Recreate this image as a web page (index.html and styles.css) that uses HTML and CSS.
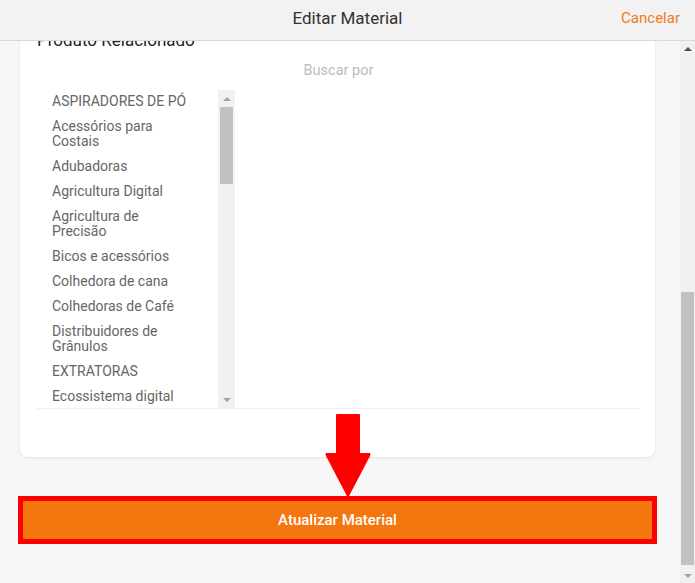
FILE: index.html
```html
<!DOCTYPE html>
<html lang="pt-BR">
<head>
    <meta charset="UTF-8">
    <meta name="viewport" content="width=device-width, initial-scale=1.0">
    <title>Editar Material</title>
    <link rel="stylesheet" href="styles.css">
</head>
<body>
    <div class="topbar">
        <span class="topbar-title">Editar Material</span>
        <a class="topbar-cancel" href="#">Cancelar</a>
    </div>

    <div class="page">
        <div class="page-content">
            <div class="card">
                <h2 class="card-title">Produto Relacionado</h2>
                <div class="search">Buscar por</div>

                <div class="picker">
                    <ul class="picker-list">
                        <li>ASPIRADORES DE PÓ</li>
                        <li>Acessórios para Costais</li>
                        <li>Adubadoras</li>
                        <li>Agricultura Digital</li>
                        <li>Agricultura de Precisão</li>
                        <li>Bicos e acessórios</li>
                        <li>Colhedora de cana</li>
                        <li>Colhedoras de Café</li>
                        <li>Distribuidores de Grânulos</li>
                        <li>EXTRATORAS</li>
                        <li>Ecossistema digital</li>
                    </ul>
                    <div class="mini-scroll">
                        <div class="mini-btn"><span class="tri tri-up"></span></div>
                        <div class="mini-thumb"></div>
                        <div class="mini-fill"></div>
                        <div class="mini-btn"><span class="tri tri-down"></span></div>
                    </div>
                </div>
                <div class="picker-rule"></div>
            </div>

            <div class="submit-wrap">
                <button class="submit-btn">Atualizar Material</button>
            </div>

            <!-- annotation arrow pointing at the button -->
            <svg class="hint-arrow" width="48" height="86" viewBox="0 0 48 86">
                <path d="M12 2 Q12 1 13 1 L35 1 Q36 1 36 2 L36 40 L46 40 Q47 41 46 43 L24 85 L2 43 Q1 41 2 40 L12 40 Z" fill="#ff0000"/>
            </svg>
        </div>

        <div class="page-scroll">
            <div class="page-btn"><span class="tri tri-up dark"></span></div>
            <div class="page-fill"></div>
            <div class="page-thumb"></div>
            <div class="page-btn"><span class="tri tri-down"></span></div>
        </div>
    </div>
</body>
</html>
```

FILE: styles.css
```css
* {
    box-sizing: border-box;
}
body {
    margin: 0;
    font-family: Roboto, "Liberation Sans", sans-serif;
    background-color: #f7f7f7;
    height: 583px;
    overflow: hidden;
}
.topbar {
    height: 41px;
    background-color: #f2f2f2;
    border-bottom: 1px solid #d9d9d9;
    display: flex;
    align-items: center;
    justify-content: center;
    position: relative;
}
.topbar-title {
    font-size: 17px;
    color: #333;
    margin-top: -4px;
}
.topbar-cancel {
    position: absolute;
    right: 15px;
    top: 9px;
    font-size: 15px;
    color: #f47a16;
    text-decoration: none;
}
.page {
    display: flex;
    height: 542px;
}
.page-content {
    flex: 1;
    position: relative;
    overflow: hidden;
}
.card {
    margin: -21px 25px 0 20px;
    padding: 10px 15px 48px 17px;
    background-color: #fff;
    border-radius: 8px;
    box-shadow: 0 1px 3px rgba(0, 0, 0, 0.08);
}
.card-title {
    margin: 0;
    font-size: 17px;
    font-weight: 400;
    line-height: 20px;
    color: #222;
}
.search {
    margin-top: 6px;
    height: 30px;
    line-height: 30px;
    text-align: center;
    font-size: 14.5px;
    color: #bbb;
}
.picker {
    margin-top: 3px;
    width: 198px;
    height: 319px;
    display: flex;
}
.picker-list {
    flex: 1;
    margin: 0;
    padding: 0 0 0 15px;
    list-style: none;
    overflow: hidden;
}
.picker-list li {
    width: 138px;
    padding: 5px 0;
    font-size: 14px;
    line-height: 15px;
    color: #666;
}
.mini-scroll {
    width: 17px;
    margin-top: 1px;
    background-color: #f1f1f1;
    display: flex;
    flex-direction: column;
    align-items: center;
}
.mini-btn {
    width: 17px;
    height: 17px;
    display: flex;
    align-items: center;
    justify-content: center;
}
.mini-thumb {
    width: 13px;
    height: 77px;
    background-color: #c1c1c1;
}
.mini-fill {
    flex: 1;
}
.picker-rule {
    height: 1px;
    background-color: #eee;
}
.tri {
    width: 0;
    height: 0;
    border-left: 4px solid transparent;
    border-right: 4px solid transparent;
}
.tri-up {
    border-bottom: 4px solid #a3a3a3;
}
.tri-down {
    border-top: 4px solid #a3a3a3;
}
.tri-up.dark {
    border-bottom-color: #505050;
}
.submit-wrap {
    margin: 39px 23px 0 18px;
}
.submit-btn {
    display: block;
    width: 100%;
    height: 48px;
    border: 5px solid #ff0000;
    background-color: #f4760f;
    color: #fff;
    font-family: Roboto, "Liberation Sans", sans-serif;
    font-size: 15px;
    font-weight: 500;
    cursor: pointer;
}
.hint-arrow {
    position: absolute;
    left: 324px;
    top: 372px;
}
.page-scroll {
    width: 15px;
    background-color: #f1f1f1;
    display: flex;
    flex-direction: column;
    align-items: center;
}
.page-btn {
    width: 15px;
    height: 15px;
    display: flex;
    align-items: center;
    justify-content: center;
}
.page-fill {
    flex: 1;
}
.page-thumb {
    width: 13px;
    height: 273px;
    margin-bottom: 3px;
    background-color: #c1c1c1;
}
```
